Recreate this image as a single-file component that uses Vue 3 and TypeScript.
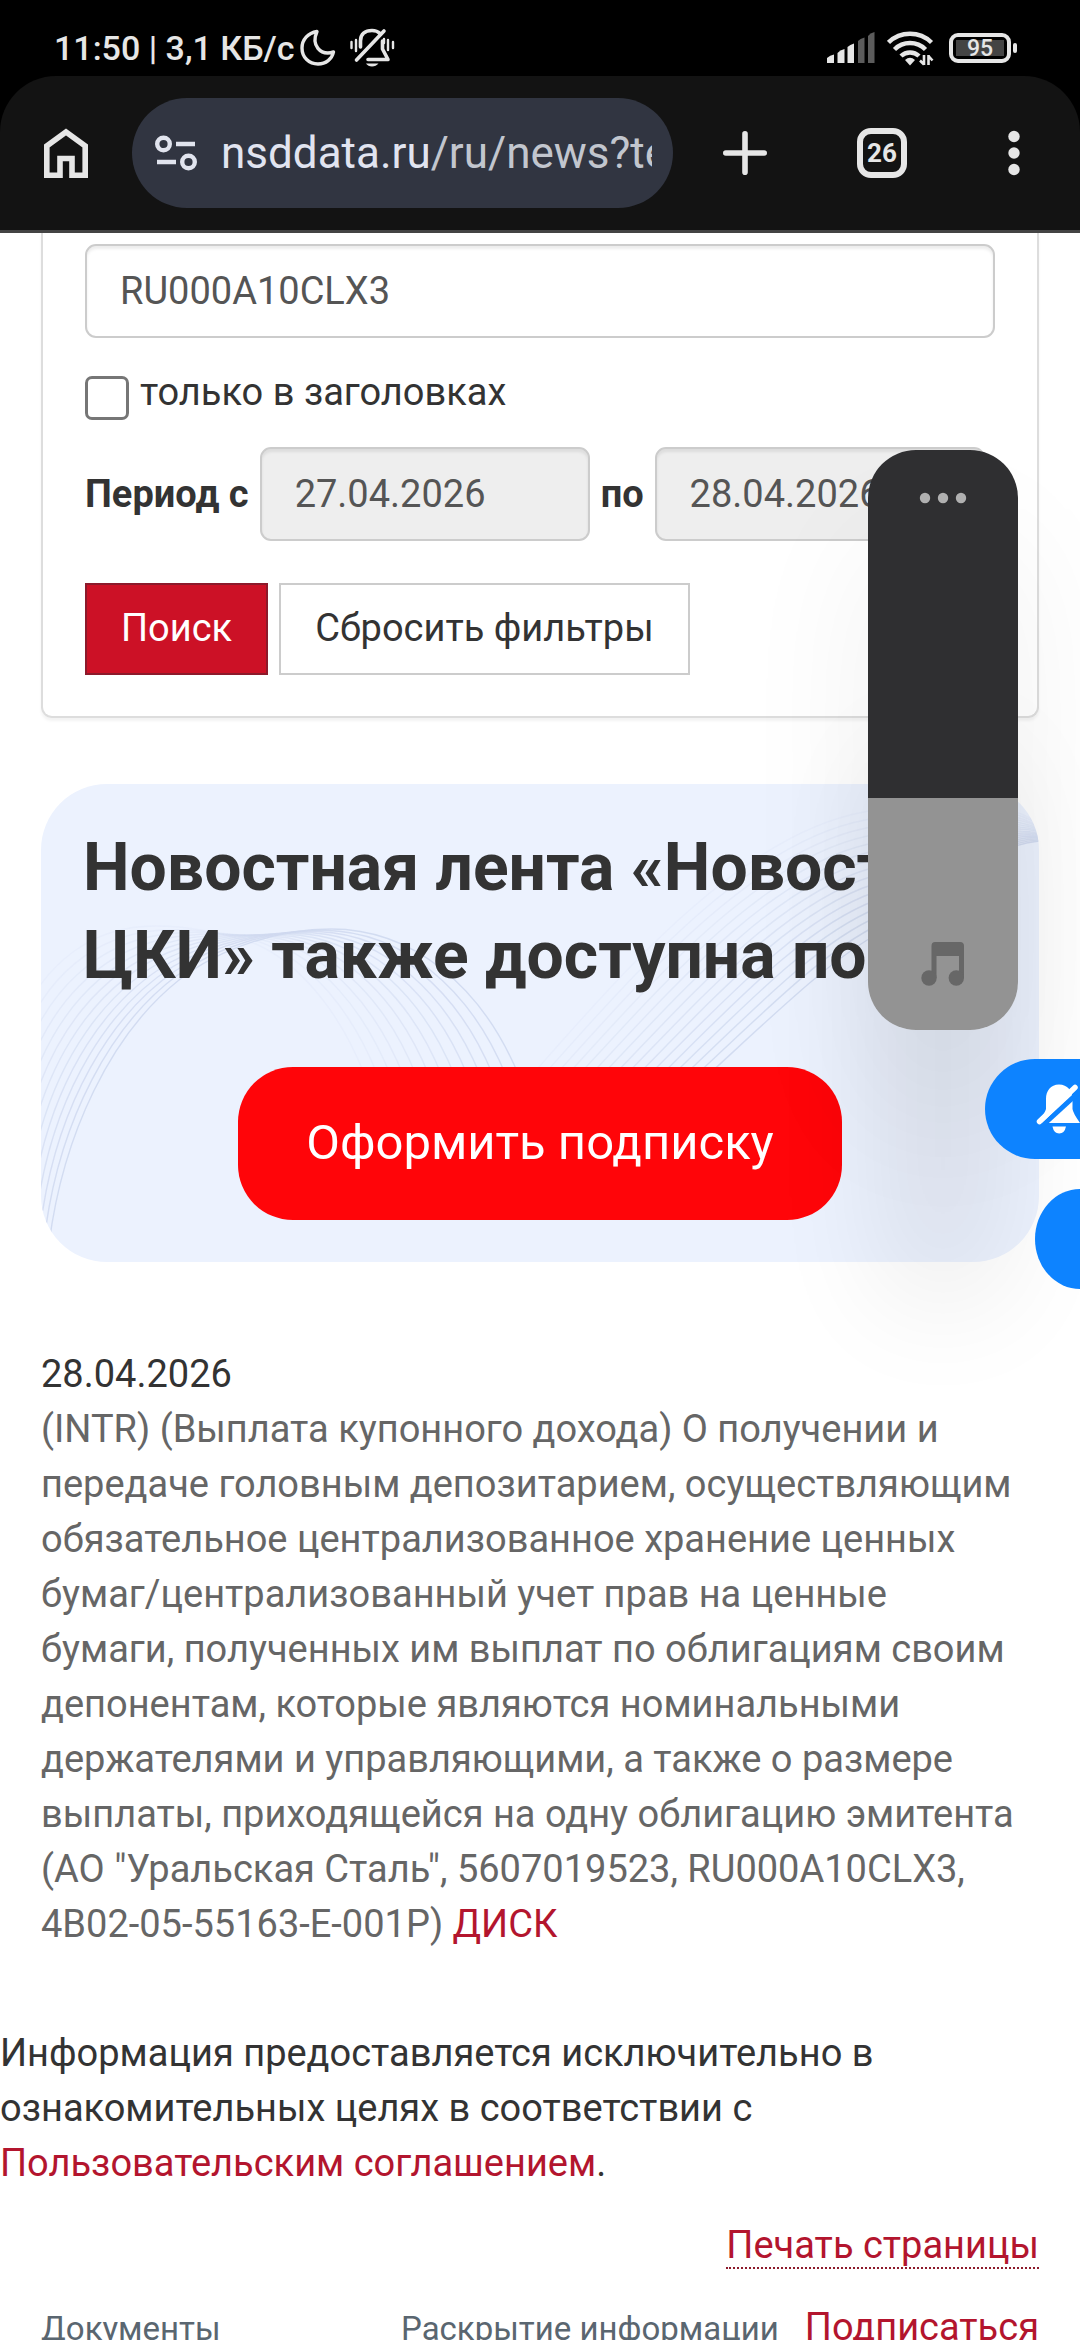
<script setup lang="ts">
import { computed, ref } from 'vue'

const query = ref('RU000A10CLX3')
const titlesOnly = ref(false)
const dateFrom = ref('27.04.2026')
const dateTo = ref('28.04.2026')
const volume = ref(40)

const volumeFill = computed(() => ({
  background: `linear-gradient(to top, #939393 ${volume.value}%, #2f2f31 ${volume.value}%)`,
}))

interface Wave {
  d: string
  opacity: number
}

// Blends two cubic curves with the same segments into a fan of lines.
function fan(from: number[], to: number[], count: number, fade: number): Wave[] {
  return Array.from({ length: count }, (_, i) => {
    const t = i / (count - 1)
    const p = from.map((v, k) => Math.round((v + (to[k] - v) * t) * 10) / 10)
    let d = `M${p[0]} ${p[1]}`
    for (let k = 2; k < p.length; k += 6) {
      d += `C${p.slice(k, k + 6).join(' ')}`
    }
    return { d, opacity: 0.9 - t * fade }
  })
}

const waves: Wave[] = [
  ...fan(
    [8, 460, 22, 350, 70, 250, 138, 196, 180, 163, 240, 145, 290, 145, 370, 145, 440, 200, 478, 292],
    [-30, 260, 0, 170, 60, 142, 114, 142, 150, 142, 185, 150, 215, 160, 260, 180, 300, 230, 324, 292],
    13,
    0.75,
  ),
  ...fan(
    [666, 292, 740, 224, 790, 175, 840, 148, 890, 120, 940, 62, 998, 57],
    [490, 292, 580, 190, 700, 50, 823, 28, 880, 15, 960, 12, 998, 40],
    16,
    0.75,
  ),
]
</script>

<template>
  <div class="screen">
    <div class="status">
      <div class="status-left">
        <span>11:50 | 3,1 КБ/с</span>
        <svg class="moon" width="36" height="38" viewBox="0 0 36 38" fill="none" stroke="#e6e6e6" stroke-width="3.4" stroke-linejoin="round">
          <path d="M17 2.5C8 4 2 10.500 2 19C2 28.500 9 35 18 35C26 35 32 30 33.500 23C20 27 11 16 17 2.500Z" />
        </svg>
        <svg width="46" height="40" viewBox="0 0 46 40" fill="none" stroke="#e6e6e6" stroke-width="3.600" stroke-linecap="round" stroke-linejoin="round">
          <path d="M10.500 19V13C10.500 6 15 2.500 22 2.500C25 2.500 28 3.500 30 5.500M34 3L6.500 32M32.500 13V21L38 31.500H18" />
          <path d="M16 35.500H28.500Q26 38.500 22 38.500T16 35.500Z" fill="#e6e6e6" stroke="none" />
          <path stroke-width="2.400" d="M1.500 14v6M6 12v11M38 12v10M43 14v6M34 11v4" />
        </svg>
      </div>
      <div class="status-right">
        <svg width="48" height="32" viewBox="0 0 48 32">
          <g fill="#e6e6e6">
            <path d="M0 31V26Q3 23 7 22.500V31Z" />
            <path d="M10.500 31V21Q13 18 17.500 17V31Z" />
            <path d="M20.500 31V15Q23 12.500 27 11.500V31Z" />
          </g>
          <g fill="#5c5c5c">
            <path d="M31 31V9Q33 6.500 37.500 5.500V31Z" />
            <path d="M41 31V4Q43 1 47.500 0V31Z" />
          </g>
        </svg>
        <svg class="wifi" width="48" height="38" viewBox="0 0 48 38" fill="none" stroke="#e6e6e6" stroke-width="4.500">
          <path d="M1.500 13.500A31 31 0 0 1 44.500 13.500M7.500 20.500A22 22 0 0 1 38.500 20.500M14 27A13 13 0 0 1 32 27" />
          <path d="M18 31Q23 26.500 28 31L23 36.500Z" fill="#e6e6e6" stroke="none" />
          <path stroke-width="2.600" d="M37 26v10M41.500 36V26M33 31.500L37 35.500M41.500 27L45.500 31.500" />
        </svg>
        <div class="battery"><span class="charge">95</span></div>
      </div>
    </div>

    <header class="toolbar">
      <button class="tool home" type="button" aria-label="Главная">
        <svg width="44" height="50" viewBox="0 0 44 50" fill="none" stroke="#e6e6e6" stroke-width="5.600">
          <path d="M2.800 47.200V18L22 4L41.200 18V47.200H28V30.500H16V47.200Z" />
        </svg>
      </button>
      <div class="omnibox">
        <svg width="42" height="36" viewBox="0 0 42 36" fill="none" stroke="#e1e4ee" stroke-width="4.400">
          <circle cx="8.500" cy="9" r="6.300" />
          <circle cx="33.500" cy="27" r="6.300" />
          <path d="M21 9H40M2 27H21" />
        </svg>
        <span class="url">nsddata.ru<span class="path">/ru/news?te</span></span>
      </div>
      <button class="tool plus" type="button" aria-label="Новая вкладка">
        <svg width="44" height="44" viewBox="0 0 44 44" stroke="#e6e6e6" stroke-width="5.600" stroke-linecap="round">
          <path d="M22 2.800V41.200M2.800 22H41.200" />
        </svg>
      </button>
      <button class="tool tabs" type="button">26</button>
      <button class="tool more" type="button" aria-label="Меню">
        <svg width="12" height="46" viewBox="0 0 12 46" fill="#e6e6e6">
          <circle cx="6" cy="6.500" r="5.700" />
          <circle cx="6" cy="23" r="5.700" />
          <circle cx="6" cy="39.500" r="5.700" />
        </svg>
      </button>
    </header>

    <main class="page">
      <form class="filters" @submit.prevent>
        <input v-model="query" class="field" type="text" aria-label="Поиск" />
        <label class="check">
          <input v-model="titlesOnly" type="checkbox" />
          <span>только в заголовках</span>
        </label>
        <div class="period">
          <label for="from">Период с</label>
          <input id="from" v-model="dateFrom" class="field date" type="text" readonly />
          <label for="to">по</label>
          <input id="to" v-model="dateTo" class="field date" type="text" readonly />
        </div>
        <div class="actions">
          <button class="btn primary" type="submit">Поиск</button>
          <button class="btn" type="reset">Сбросить фильтры</button>
        </div>
      </form>

      <section class="banner">
        <svg class="waves" viewBox="0 0 998 478" preserveAspectRatio="none" fill="none" stroke="#cfd9ef" stroke-width="1.400" aria-hidden="true">
          <path v-for="(w, i) in waves" :key="i" :d="w.d" :opacity="w.opacity" />
        </svg>
        <h2>Новостная лента «Новости ЦКИ» также доступна по</h2>
        <button class="subscribe" type="button">Оформить подписку</button>
      </section>

      <article class="news">
        <time>28.04.2026</time>
        <p>
          (INTR) (Выплата купонного дохода) О получении и передаче головным депозитарием, осуществляющим
          обязательное централизованное хранение ценных бумаг/централизованный учет прав на ценные бумаги,
          полученных им выплат по облигациям своим депонентам, которые являются номинальными держателями и
          управляющими, а также о размере выплаты, приходящейся на одну облигацию эмитента (АО "Уральская
          Сталь", 5607019523, RU000A10CLX3, 4B02-05-55163-E-001P) <a href="#disc">ДИСК</a>
        </p>
      </article>

      <p class="notice">
        Информация предоставляется исключительно в ознакомительных целях в соответствии с
        <a href="#terms">Пользовательским соглашением</a>.
      </p>

      <div class="print"><a class="dotted" href="#print">Печать страницы</a></div>

      <footer class="links">
        <a href="#docs">Документы</a>
        <a href="#disclosure">Раскрытие информации</a>
        <a class="dotted" href="#subscribe">Подписаться</a>
      </footer>
    </main>

    <div class="volume">
      <input v-model.number="volume" class="level" :style="volumeFill" type="range" min="0" max="100" aria-label="Громкость" />
      <button class="volume-more" type="button" aria-label="Ещё">
        <svg width="48" height="12" viewBox="0 0 48 12" fill="#b0b0b0">
          <circle cx="6" cy="6" r="5.200" />
          <circle cx="24" cy="6" r="5.200" />
          <circle cx="42" cy="6" r="5.200" />
        </svg>
      </button>
      <svg class="note" width="44" height="44" viewBox="0 0 44 44" fill="#676767">
        <path d="M14 0H39Q43 0 43 4V36H38V14H15.500V36H10.500V4Q10.500 0 14 0Z" />
        <circle cx="8" cy="36" r="7.700" />
        <circle cx="35.300" cy="36" r="7.700" />
      </svg>
    </div>

    <button class="pill mute" type="button" aria-label="Без звука">
      <svg width="48" height="50" viewBox="0 0 48 50">
        <path fill="#fff" d="M23 .500C14.500 .500 10 7 10 15V25Q9 29 2 39H44Q37 29 36.500 25V15C36.500 7 31.500 .500 23 .500Z" />
        <path stroke="#0d83ff" stroke-width="5" d="M6 42L44 7" />
        <path stroke="#fff" stroke-width="5.500" stroke-linecap="round" d="M3.500 37.500L39 3.500" />
        <path fill="#fff" d="M16.500 42.500H30Q28.500 49.500 23.200 49.500T16.500 42.500Z" />
      </svg>
    </button>
    <button class="pill side" type="button" aria-label="Режим"></button>
  </div>
</template>

<style>
body {
  background: #fff;
}
</style>

<style scoped>
.screen {
  position: relative;
  display: flex;
  flex-direction: column;
  height: 100vh;
  overflow: hidden;
  background: #000;
  color: #333;
  font: 400 38px/55px Roboto, "Noto Sans", sans-serif;
}
.screen *,
.screen *::before {
  box-sizing: border-box;
}
svg {
  display: block;
  flex: none;
}
button,
input {
  margin: 0;
  font: inherit;
}
a {
  color: #b3152e;
  text-decoration: none;
}

/* status bar */
.status {
  display: flex;
  justify-content: space-between;
  flex: none;
  height: 76px;
  padding: 28px 63px 0 54px;
  color: #e6e6e6;
  font-size: 34px;
  font-weight: 500;
  line-height: 40px;
}
.status-left,
.status-right {
  display: flex;
  align-items: center;
  height: 40px;
}
.moon {
  margin: 0 14px 0 5px;
}
.wifi {
  margin: 0 14px 0 12px;
}
.battery {
  position: relative;
  width: 62px;
  height: 30px;
  margin-right: 6px;
  padding: 3px;
  border: 4px solid #e6e6e6;
  border-radius: 9px;
}
.battery::after {
  content: "";
  position: absolute;
  top: 6px;
  right: -10px;
  width: 4px;
  height: 10px;
  border-radius: 2px;
  background: #e6e6e6;
}
.charge {
  display: block;
  height: 16px;
  background: #444;
  font-size: 23px;
  line-height: 17px;
  text-align: center;
}

/* browser toolbar */
.toolbar {
  display: flex;
  align-items: center;
  flex: none;
  height: 157px;
  padding: 0 60px 0 44px;
  border-bottom: 3px solid #444;
  border-radius: 56px 56px 0 0;
  background: #131313;
}
.tool {
  flex: none;
  padding: 0;
  border: 0;
  background: none;
  color: #e6e6e6;
}
.omnibox {
  display: flex;
  flex: 1;
  align-items: center;
  gap: 24px;
  min-width: 0;
  height: 110px;
  margin: 0 50px 0 44px;
  padding: 0 21px 0 23px;
  border-radius: 55px;
  background: #313541;
}
.url {
  flex: 1;
  overflow: hidden;
  color: #e1e4f0;
  font-size: 44px;
  white-space: nowrap;
}
.path {
  color: #c2c6ce;
}
.tabs {
  width: 50px;
  height: 50px;
  margin: 0 101px 0 90px;
  border: 6px solid #e6e6e6;
  border-radius: 14px;
  font-size: 26px;
  font-weight: 700;
  line-height: 38px;
}

/* page */
.page {
  flex: 1;
  min-height: 0;
  overflow: hidden;
  background: #fff;
}
.filters {
  margin: 0 41px;
  padding: 11px 42px 41px;
  border: 2px solid #ddd;
  border-top: 0;
  border-radius: 0 0 11px 11px;
  box-shadow: 0 3px 3px rgba(0, 0, 0, 0.05);
}
.field {
  display: block;
  width: 100%;
  height: 94px;
  padding: 0 33px;
  border: 2px solid #ccc;
  border-radius: 11px;
  outline: 0;
  background: #fff;
  box-shadow: inset 0 3px 3px rgba(0, 0, 0, 0.075);
  color: #555;
}
.check {
  display: flex;
  gap: 11px;
  margin-top: 27px;
}
.check input {
  flex: none;
  width: 44px;
  height: 44px;
  margin-top: 11px;
  border: 3px solid #767676;
  border-radius: 7px;
  appearance: none;
  background: #fff;
}
.period {
  display: flex;
  align-items: center;
  gap: 11px;
  margin-top: 27px;
  font-weight: 700;
  white-space: nowrap;
}
.date {
  flex: none;
  width: 330px;
  background: #eee;
  font-weight: 400;
}
.actions {
  display: flex;
  gap: 11px;
  margin-top: 42px;
}
.btn {
  height: 92px;
  padding: 0 34px 2px;
  border: 2px solid #ccc;
  background: #fff;
  color: #333;
}
.primary {
  border-color: #8c1a2b;
  background: #cc1126;
  color: #fff;
}

.banner {
  position: relative;
  display: flex;
  flex-direction: column;
  align-items: center;
  margin: 66px 41px 0;
  padding: 40px 42px 42px;
  border-radius: 66px;
  background: #ecf2fe;
  overflow: hidden;
}
.waves {
  position: absolute;
  inset: 0;
  width: 100%;
  height: 100%;
}
.banner h2 {
  position: relative;
  width: 100%;
  margin: 0 0 67px;
  font-size: 66px;
  font-weight: 700;
  line-height: 88px;
}
.subscribe {
  position: relative;
  height: 153px;
  padding: 0 68px 2px;
  border: 0;
  border-radius: 55px;
  background: #ff0509;
  color: #fff;
  font-size: 49px;
}

.news {
  margin: 85px 60px 0 41px;
}
.news time {
  display: block;
}
.news p {
  margin: 0;
  color: #666;
}
.notice {
  margin: 74px 0 27px;
  padding-right: 120px;
}
.print {
  margin: 0 41px 27px;
  text-align: right;
}
.dotted {
  border-bottom: 2px dotted #8c1a2b;
}
.links {
  display: grid;
  grid-template-columns: 360px 1fr auto;
  align-items: baseline;
  margin: 0 41px;
}
.links a:not(.dotted) {
  color: #5a6670;
  font-size: 33px;
}

/* system overlays */
.volume {
  position: absolute;
  top: 450px;
  right: 62px;
  display: flex;
  flex-direction: column;
  align-items: center;
  justify-content: space-between;
  width: 150px;
  height: 580px;
  padding-bottom: 44px;
  border-radius: 48px;
  box-shadow: 0 290px 120px -20px rgba(0, 0, 0, 0.09), 0 90px 140px rgba(0, 0, 0, 0.06);
}
.level {
  position: absolute;
  inset: 0;
  width: 100%;
  height: 100%;
  border-radius: inherit;
  appearance: none;
  writing-mode: vertical-lr;
  direction: rtl;
}
.level::-webkit-slider-thumb {
  width: 0;
  height: 0;
  appearance: none;
}
.volume-more {
  position: relative;
  padding: 42px 51px;
  border: 0;
  background: none;
}
.note {
  position: relative;
  pointer-events: none;
}
.pill {
  position: absolute;
  right: 0;
  height: 100px;
  padding: 0;
  border: 0;
  border-radius: 50px 0 0 50px;
  background: #0d83ff;
}
.mute {
  top: 1059px;
  width: 95px;
  padding-left: 51px;
  overflow: hidden;
}
.side {
  top: 1189px;
  width: 45px;
  border-radius: 45px 0 0 45px / 50px 0 0 50px;
}
</style>
